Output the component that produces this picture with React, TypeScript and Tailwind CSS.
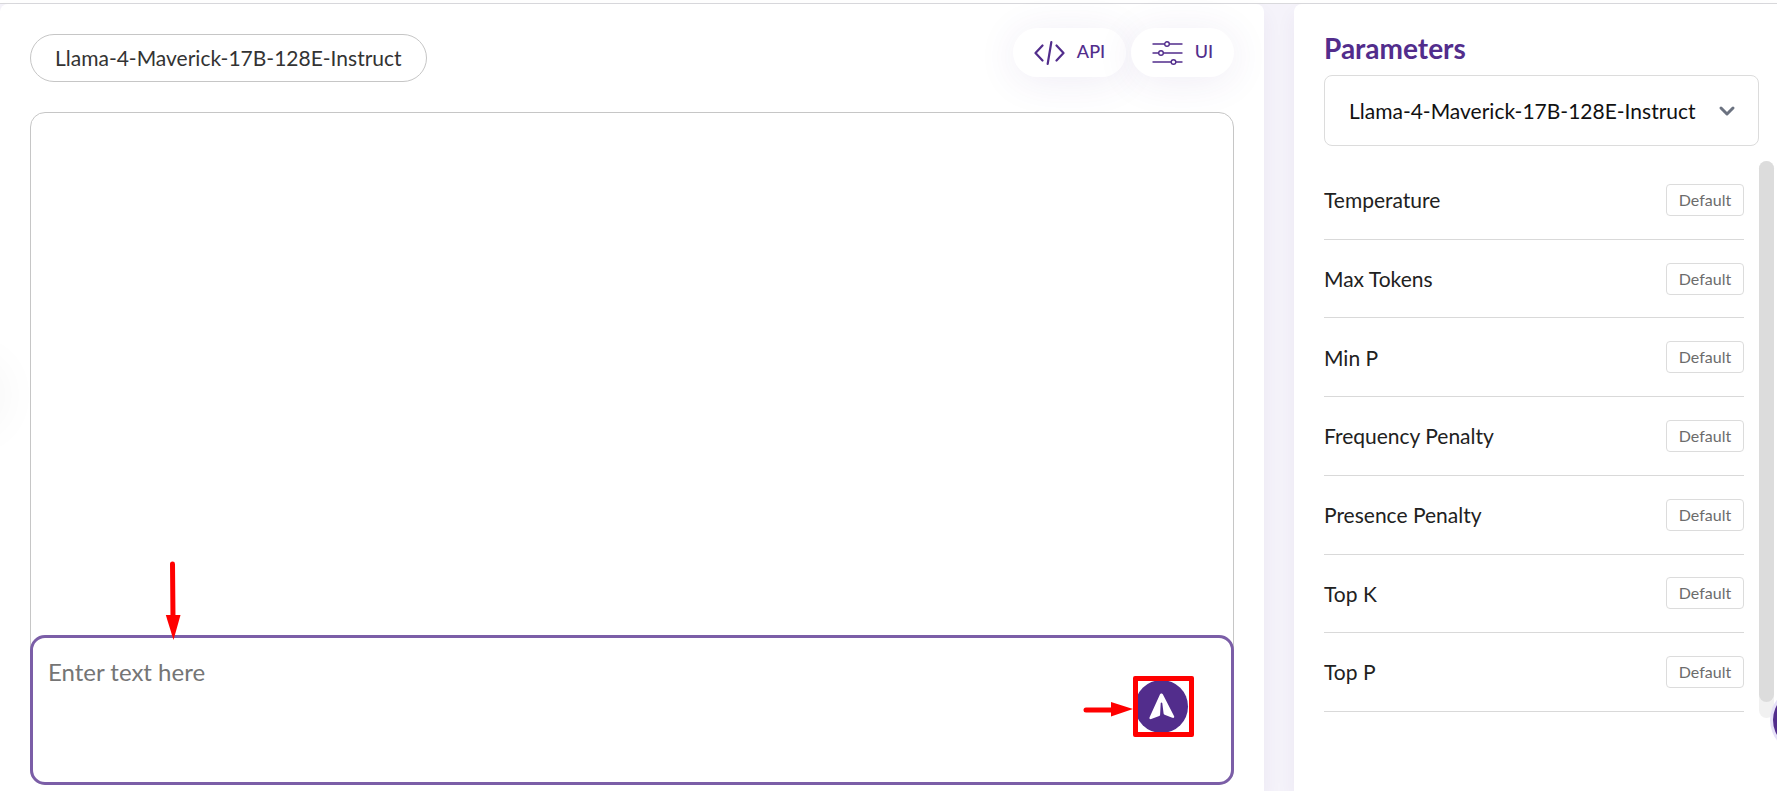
import { useState } from "react"
import { ChevronDown } from "lucide-react"

const MODEL = "Llama-4-Maverick-17B-128E-Instruct"

const parameters = [
  "Temperature",
  "Max Tokens",
  "Min P",
  "Frequency Penalty",
  "Presence Penalty",
  "Top K",
  "Top P",
]

const CodeIcon = () => (
  <svg width="31" height="24" viewBox="0 0 31 24" fill="none" stroke="currentColor" strokeWidth="2.2" strokeLinecap="round" strokeLinejoin="round" aria-hidden="true">
    <path d="M8.5 4.5 1.5 12l7 7.5" />
    <path d="M22.5 4.5l7 7.5-7 7.5" />
    <path d="M17.3 1.2 13.7 22.8" />
  </svg>
)

const SlidersIcon = () => (
  <svg width="31" height="24" viewBox="0 0 31 24" fill="#fff" stroke="currentColor" strokeWidth="1.4" strokeLinecap="round" aria-hidden="true">
    <path d="M1 3h29M1 12h29M1 21h29" />
    <circle cx="15" cy="3" r="2.3" />
    <circle cx="9" cy="12" r="2.3" />
    <circle cx="21.5" cy="21" r="2.3" />
  </svg>
)

const SendIcon = () => (
  <svg width="26" height="27" viewBox="0 0 26 27" fill="currentColor" aria-hidden="true">
    <path d="M12.4.6c-.8 0-1.300.6-1.700 1.400L.6 24.300c-.6 1.500.3 2.200 1.600 1.700l8-3c.7-.3.900-.7.900-1.300l.6-11.500c.1-1 1.400-1 1.600 0l1.300 10.200c.1.700.4 1.100 1 1.400l7.700 3c1.500.5 2.400-.4 1.700-1.700L14.200 2C13.800 1.200 13.200.6 12.400.6Z" />
  </svg>
)

const ArrowDown = () => (
  <svg width="16" height="79" viewBox="0 0 16 79" className="pointer-events-none absolute left-[132px] -top-[77px]" aria-hidden="true">
    <path d="M7.500 3l.5 54" stroke="#f00" strokeWidth="5" strokeLinecap="round" />
    <path d="M.8 54h14.700L8.500 79Z" fill="#f00" />
  </svg>
)

const ArrowRight = () => (
  <svg width="50" height="20" viewBox="0 0 50 20" className="pointer-events-none absolute right-full top-1/2 -translate-y-1/2" aria-hidden="true">
    <path d="M3 13h28" stroke="#f00" strokeWidth="5" strokeLinecap="round" />
    <path d="M28 5v14.500l22-7.500Z" fill="#f00" />
  </svg>
)

const ParameterRow = ({ name }: { name: string }) => (
  <li className="flex items-center justify-between border-b border-[#d9d9d9]">
    <span className="text-[21px] text-[#212121]">{name}</span>
    <button type="button" aria-label={`${name}: Default`} className="h-8 w-[78px] rounded border border-[#dcdcdc] text-base text-[#6c6c6c]">
      Default
    </button>
  </li>
)

export default function App() {
  const [prompt, setPrompt] = useState("")

  return (
    <div className="relative flex min-h-screen flex-col overflow-hidden bg-white pt-[3px] font-['Lato',sans-serif]">
      <div className="flex grow gap-[30px] border-t border-[#d9d9dc] bg-[#f5f3fa]">
        <main className="relative flex min-w-0 grow flex-col rounded-t-lg bg-white px-[30px] pb-[6px] pt-6 shadow-[0_10px_20px_rgba(82,45,140,0.06)]">
          <div className="absolute -left-[60px] top-[361px] size-[60px] rounded-full shadow-[0_0_50px_rgba(0,0,0,0.06)]" />

          <header className="flex items-start justify-between">
            <h1 className="mt-[6px] flex h-12 items-center rounded-full border border-[#c6c6c6] px-6 text-[21px] text-[#333]">
              {MODEL}
            </h1>
            <div className="flex gap-[5px] text-lg font-medium text-[#522d8c]">
              <button type="button" className="flex h-[49px] w-[113px] items-center justify-center gap-3 rounded-full bg-white shadow-[0_4px_40px_rgba(82,45,140,0.09)]">
                <CodeIcon />
                <span className="pb-1">API</span>
              </button>
              <button type="button" className="flex h-[49px] w-[103px] items-center justify-center gap-3 rounded-full bg-white shadow-[0_4px_40px_rgba(82,45,140,0.09)]">
                <SlidersIcon />
                <span className="pb-1">UI</span>
              </button>
            </div>
          </header>

          <section className="relative mt-[30px] flex grow flex-col justify-end rounded-[15px] border border-[#c6c6c6] bg-white">
            <div className="relative -mx-px -mb-px flex h-[150px] rounded-[15px] border-[3px] border-[#7b5ea7] bg-white">
              <textarea
                aria-label="Prompt"
                value={prompt}
                onChange={(e) => setPrompt(e.target.value)}
                placeholder="Enter text here"
                className="grow resize-none rounded-xl bg-transparent px-[15px] py-[18px] text-2xl text-[#333] outline-none placeholder:text-[#757575]"
              />
              <div className="relative mr-[37px] mt-[38px] flex size-[61px] items-center">
                <button type="button" aria-label="Send" className="ml-[2px] flex size-[53px] shrink-0 items-center justify-center rounded-full bg-[#522d8c] text-white">
                  <SendIcon />
                </button>
                <div className="pointer-events-none absolute inset-0 rounded-xs border-[5px] border-[#f00]" />
                <ArrowRight />
              </div>
              <ArrowDown />
            </div>
          </section>
        </main>

        <aside className="w-[483px] shrink-0 rounded-tl-lg bg-white pl-[30px] pr-[3px] pt-[26px] shadow-[0_10px_20px_rgba(82,45,140,0.06)]">
          <h2 className="text-[28px] leading-9 font-bold text-[#522d8c]">Parameters</h2>
          <div className="relative mt-[9px] mr-[15px]">
            <select aria-label="Model" defaultValue={MODEL} className="h-[71px] w-full appearance-none rounded-lg border border-[#dcdcdc] bg-white pl-6 pr-14 text-[21px] text-[#111]">
              <option>{MODEL}</option>
            </select>
            <ChevronDown size={24} strokeWidth={3} className="pointer-events-none absolute right-5 top-1/2 -translate-y-1/2 text-[#6b7280]" />
          </div>

          <div className="mt-[15px] flex h-[557px] justify-between">
            <ul className="mr-[15px] mb-[6px] grid grow auto-rows-fr">
              {parameters.map((name) => (
                <ParameterRow key={name} name={name} />
              ))}
            </ul>
            <div className="w-[15px] rounded-full bg-[#f1f1f1]">
              <div className="h-[541px] rounded-full bg-[#dcdcdc]" />
            </div>
          </div>
        </aside>
      </div>

      <button type="button" aria-label="Open chat" className="absolute -right-[56px] top-[690px] size-[60px] rounded-full bg-[#522d8c] ring-3 ring-[#e6e0f8]" />
    </div>
  )
}
